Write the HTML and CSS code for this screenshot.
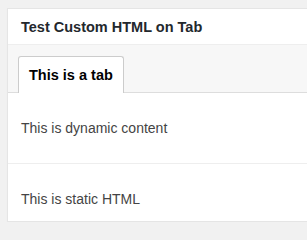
FILE: index.html
```html
<!DOCTYPE html>
<html lang="en">
<head>
    <meta charset="UTF-8">
    <title>Test Custom HTML on Tab</title>
    <link rel="stylesheet" href="styles.css">
</head>
<body>
    <div class="postbox">
        <h2 class="postbox-title">Test Custom HTML on Tab</h2>

        <div class="tab-bar">
            <div class="tab active">This is a tab</div>
        </div>

        <div class="tab-panel">
            <p>This is dynamic content</p>
        </div>

        <div class="static-html">
            <p>This is static HTML</p>
        </div>
    </div>
</body>
</html>
```

FILE: styles.css
```css
body {
    margin: 0;
    padding: 8px 0 0 7px;
    background-color: #f1f1f1;
    font-family: "Liberation Sans", Arial, sans-serif;
    color: #444;
}

.postbox {
    background-color: #fff;
    border: 1px solid #e5e5e5;
    border-right: none;
    box-shadow: 0 1px 1px rgba(0, 0, 0, 0.04);
    height: 212px;
}

.postbox-title {
    margin: 0;
    height: 35px;
    padding: 0 13px;
    font-size: 14.5px;
    font-weight: bold;
    line-height: 36px;
    color: #23282d;
    border-bottom: 1px solid #eee;
}

.tab-bar {
    display: flex;
    align-items: flex-end;
    height: 47px;
    padding: 0 0 0 10px;
    background-color: #f7f7f7;
    border-bottom: 1px solid #ddd;
}

.tab {
    height: 36px;
    padding: 0 10px;
    font-size: 14.5px;
    font-weight: bold;
    line-height: 36px;
    color: #000;
    background-color: #fff;
    border: 1px solid #ccc;
    border-bottom: none;
    border-radius: 3px 3px 0 0;
    margin-bottom: -1px;
}

.tab-panel {
    height: 70px;
    padding: 0 13px;
    display: flex;
    align-items: center;
    border-bottom: 1px solid #eee;
}

.static-html {
    height: 57px;
    padding: 12px 13px 0;
    box-sizing: border-box;
    display: flex;
    align-items: center;
}

p {
    margin: 0;
    font-size: 14px;
}
```
